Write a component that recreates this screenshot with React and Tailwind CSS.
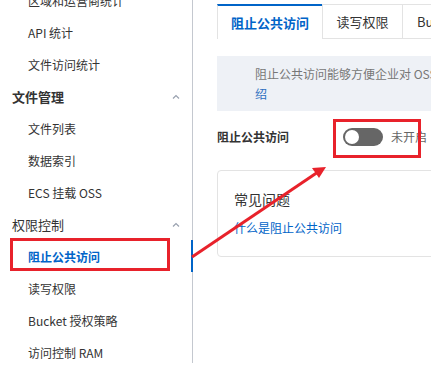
import React from 'react';

const font = { fontFamily: '"Noto Sans CJK SC", "Noto Sans", sans-serif' };

const Chevron = () => (
  <svg className="w-[10px] h-[10px] text-gray-400" viewBox="0 0 10 10" fill="none" stroke="currentColor" strokeWidth="1.2">
    <polyline points="2,6.5 5,3.5 8,6.5" />
  </svg>
);

const Item = ({ children, active }) => (
  <div
    className={`h-8 flex items-center pl-7 text-xs ${active ? 'text-[#0064c8] font-bold' : 'text-[#333]'}`}
  >
    {children}
  </div>
);

const Group = ({ children, bold }) => (
  <div className="h-8 flex items-center justify-between pl-3 pr-[11px]">
    <span className={`text-[13px] text-[#333] ${bold ? 'font-bold' : ''}`}>{children}</span>
    <Chevron />
  </div>
);

export default function App() {
  return (
    <div className="relative w-[431px] h-[369px] overflow-hidden bg-white flex" style={font}>
      {/* Sidebar */}
      <div className="w-[193px] shrink-0 h-[363px] border-r border-[#c4c8cf] relative">
        <div className="-mt-[15px]">
          <Item>区域和运营商统计</Item>
          <Item>API 统计</Item>
          <Item>文件访问统计</Item>
          <Group bold>文件管理</Group>
          <Item>文件列表</Item>
          <Item>数据索引</Item>
          <Item>ECS 挂载 OSS</Item>
          <Group>权限控制</Group>
          <Item active>阻止公共访问</Item>
          <Item>读写权限</Item>
          <Item>Bucket 授权策略</Item>
          <Item>访问控制 RAM</Item>
        </div>
        <div className="absolute right-[-1px] top-[240px] w-[2px] h-[32px] bg-[#0064c8]" />
      </div>

      {/* Main */}
      <div className="flex-1 pl-6 pt-1 min-w-0">
        <div className="flex h-[35px] text-[13px]">
          <div className="w-[105px] shrink-0 border-t-2 border-[#0064c8] border-l border-l-[#e3e3e3] flex items-center justify-center font-bold text-[#0064c8]">
            阻止公共访问
          </div>
          <div className="w-[81px] shrink-0 border border-[#e3e3e3] flex items-center justify-center text-[#333]">
            读写权限
          </div>
          <div className="flex-1 border-t border-b border-[#e3e3e3] flex items-center pl-[14px] text-[#333] whitespace-nowrap overflow-hidden">
            Bucket 授权策略
          </div>
        </div>

        <div className="mt-[17px] h-[55px] bg-[#eef1f6] pl-[38px] pt-[8px] text-xs leading-5 whitespace-nowrap overflow-hidden">
          <div className="text-[#777]">阻止公共访问能够方便企业对 OSS 资源的访问</div>
          <div className="text-[#2d6fc0]">绍</div>
        </div>

        <div className="mt-[16px] h-[20px] flex items-center text-xs">
          <span className="w-[126px] shrink-0 text-[#333] font-bold">阻止公共访问</span>
          <div className="w-[40px] h-[18px] rounded-full bg-[#666] flex items-center pl-[2px]">
            <div className="w-[14px] h-[14px] rounded-full bg-white" />
          </div>
          <span className="ml-[8px] text-[#666]">未开启</span>
        </div>

        <div className="mt-[23px] h-[87px] w-[260px] border border-[#e3e3e3] rounded-[4px] pl-4 pt-[18px]">
          <div className="text-sm text-[#333] leading-5">常见问题</div>
          <div className="mt-[11px] text-xs text-[#0064c8] leading-4">什么是阻止公共访问</div>
        </div>
      </div>

      {/* Annotations */}
      <div className="absolute left-[10px] top-[238px] w-[160px] h-[33px] border-[3px] border-[#e8222b]" />
      <div className="absolute left-[333px] top-[119px] w-[88px] h-[39px] border-[3px] border-[#e8222b]" />
      <svg className="absolute left-0 top-0 w-[431px] h-[369px] pointer-events-none" viewBox="0 0 431 369">
        <line x1="192" y1="257" x2="318" y2="172" stroke="#e8222b" strokeWidth="3" />
        <polygon points="326,167 312,168 319,178" fill="#e8222b" />
      </svg>
    </div>
  );
}
